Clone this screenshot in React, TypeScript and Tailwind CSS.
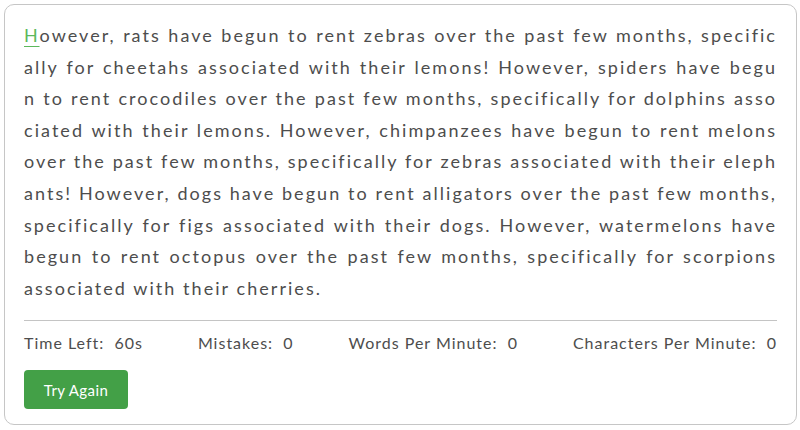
import React from "react";

const lines = [
  "However, rats have begun to rent zebras over the past few months, specific",
  "ally for cheetahs associated with their lemons! However, spiders have begu",
  "n to rent crocodiles over the past few months, specifically for dolphins asso",
  "ciated with their lemons. However, chimpanzees have begun to rent melons",
  "over the past few months, specifically for zebras associated with their eleph",
  "ants! However, dogs have begun to rent alligators over the past few months,",
  "specifically for figs associated with their dogs. However, watermelons have",
  "begun to rent octopus over the past few months, specifically for scorpions",
  "associated with their cherries.",
];

export default function App() {
  return (
    <div className="w-[800px] h-[430px] bg-white pt-[4px] pl-[4px]" style={{ fontFamily: "Lato, 'Open Sans', sans-serif" }}>
      <div className="w-[793px] h-[421px] border border-[#c6c6c6] rounded-[10px] px-[19px] pt-[15px] text-[#4d4d4d]">
        <div className="text-[18px] leading-[31.6px] tracking-[2.05px]">
          {lines.map((l, i) => (
            <div
              key={i}
              className={
                i < lines.length - 1
                  ? "text-justify [text-align-last:justify] whitespace-nowrap"
                  : "whitespace-nowrap"
              }
            >
              {i === 0 ? (
                <>
                  <span className="text-[#5cb85c] underline decoration-[#5cb85c] underline-offset-[4px]">H</span>
                  {l.slice(1)}
                </>
              ) : (
                l
              )}
            </div>
          ))}
        </div>
        <div className="mt-[16px] border-t border-[#c4c4c4]" />
        <div className="mt-[10px] flex justify-between text-[16px] leading-[24px] tracking-[1px]">
          <span>Time Left:&nbsp; 60s</span>
          <span>Mistakes:&nbsp; 0</span>
          <span>Words Per Minute:&nbsp; 0</span>
          <span>Characters Per Minute:&nbsp; 0</span>
        </div>
        <button className="mt-[15px] w-[104px] h-[39px] rounded-[4px] bg-[#43a047] text-white text-[15px] tracking-[0.4px]">
          Try Again
        </button>
      </div>
    </div>
  );
}
